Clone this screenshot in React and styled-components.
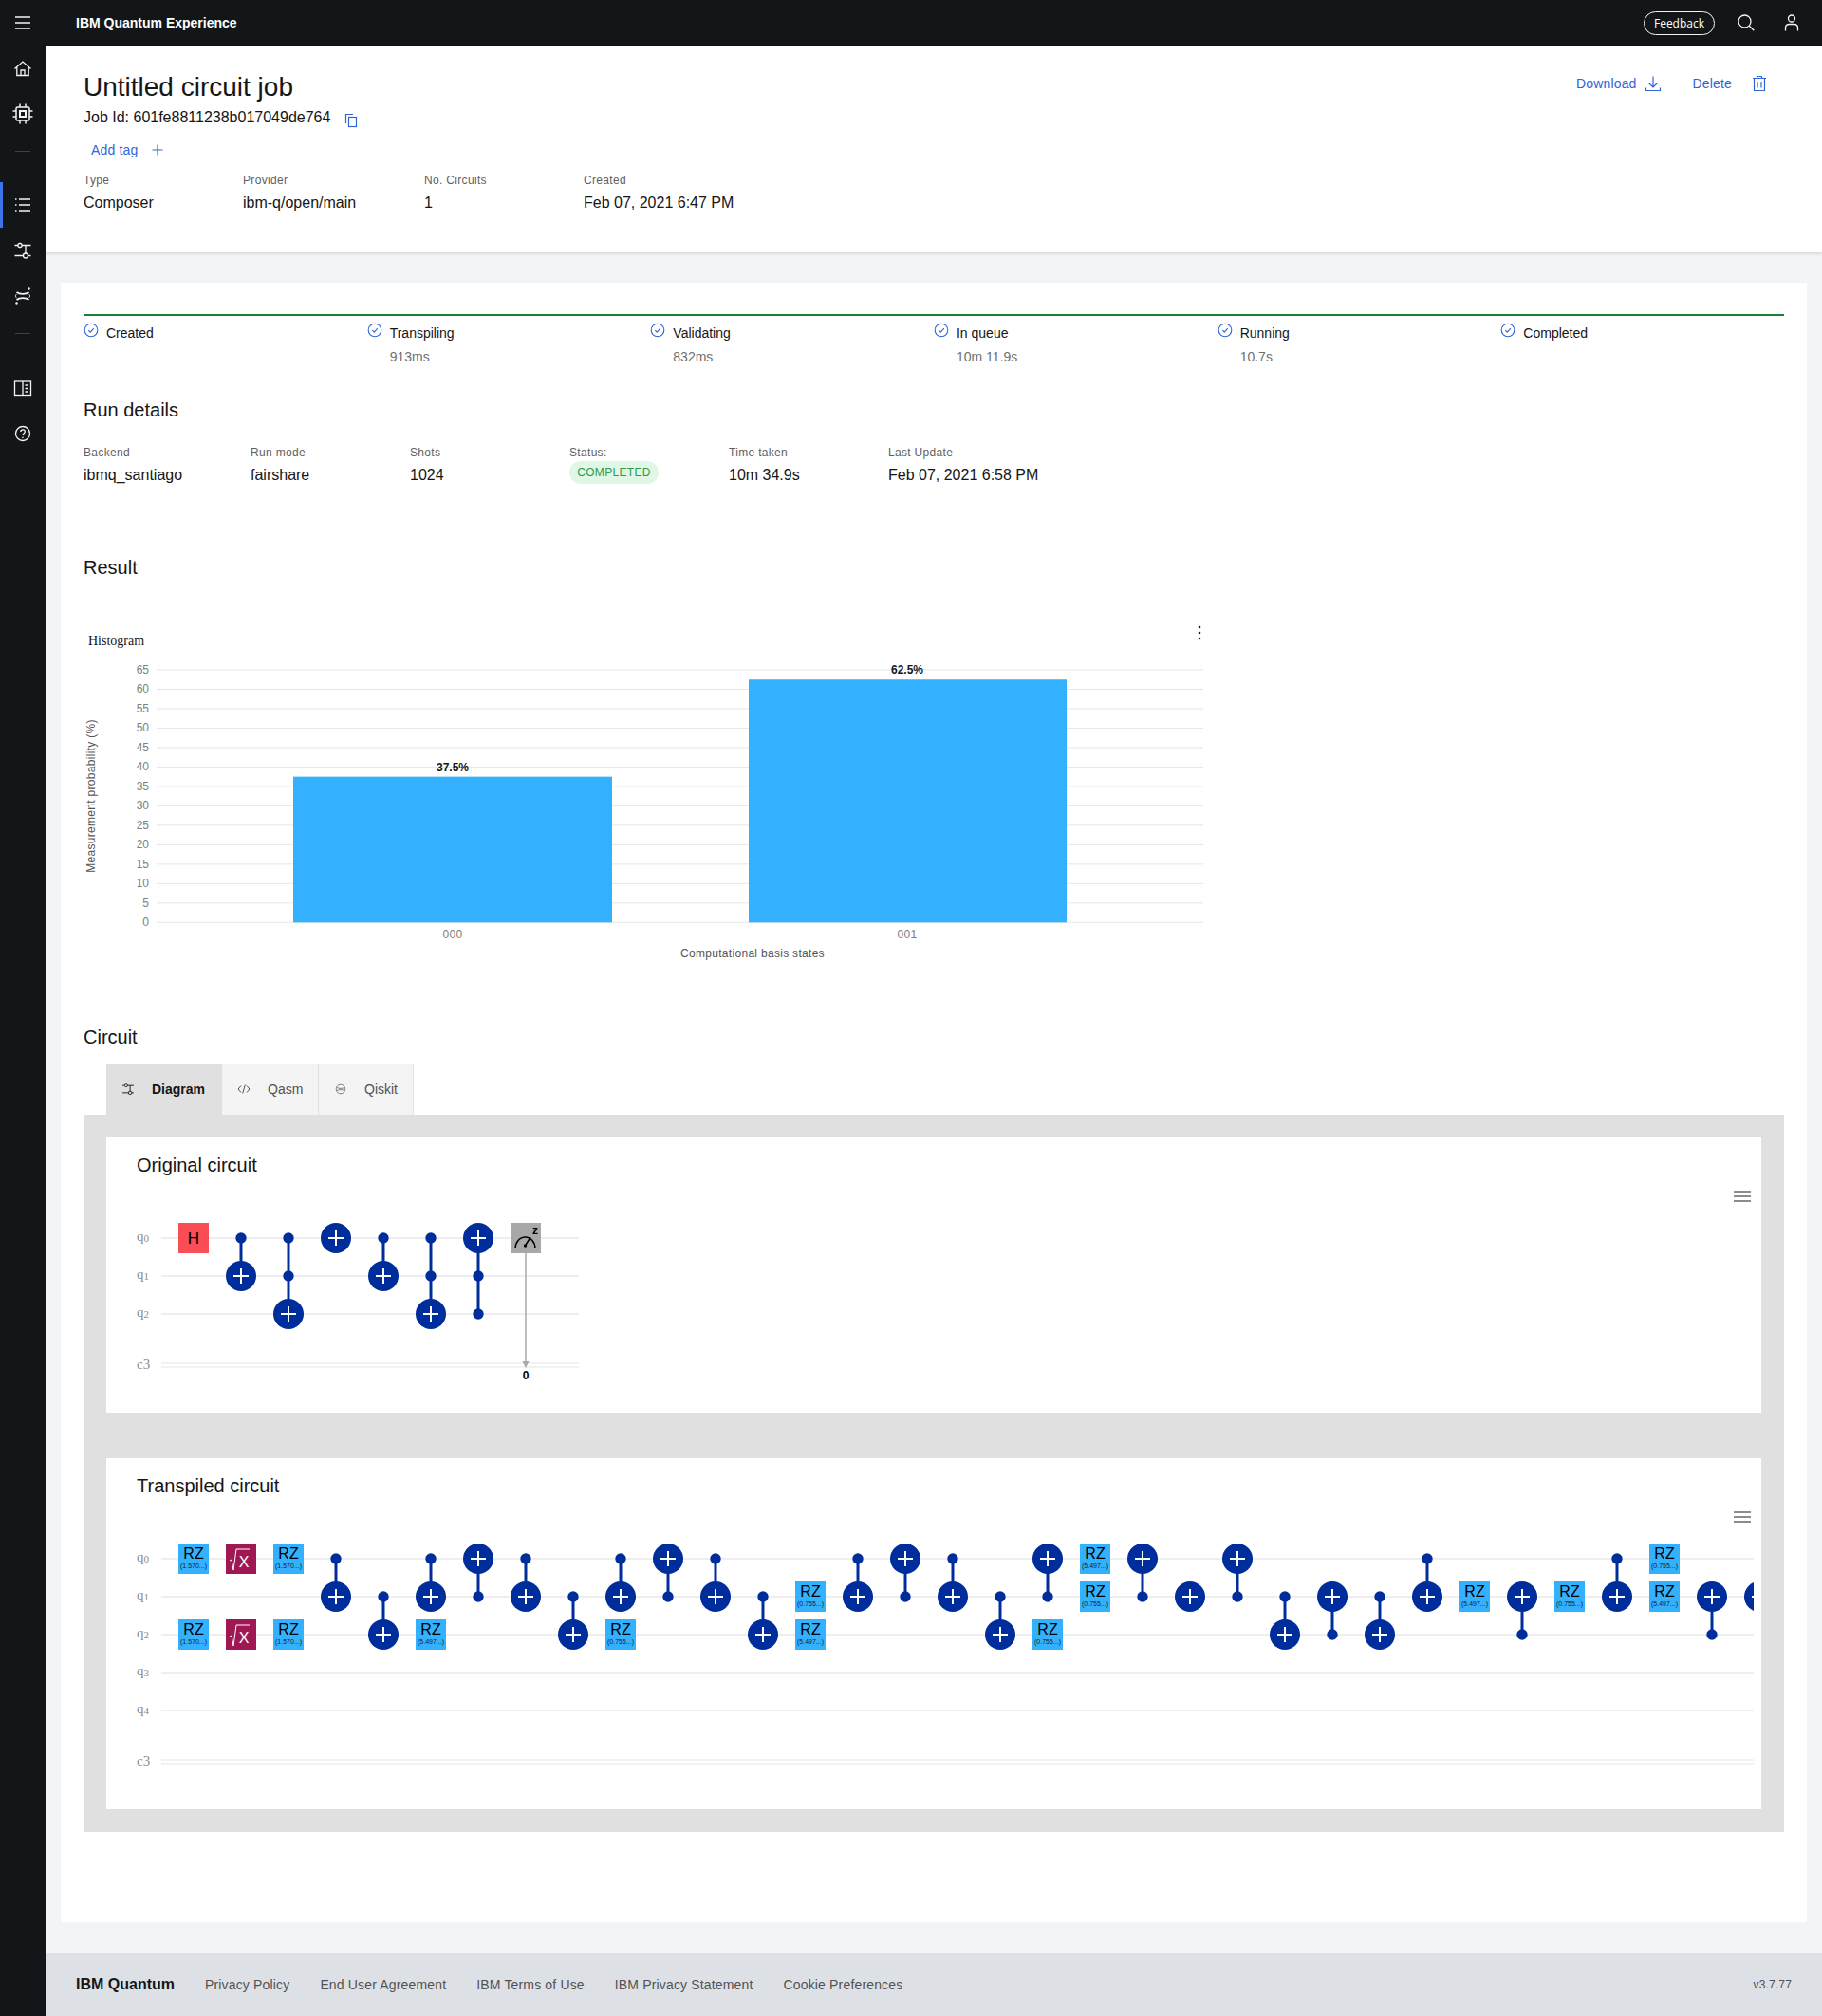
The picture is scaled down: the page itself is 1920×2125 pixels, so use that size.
import styled, { createGlobalStyle } from "styled-components";

const Global = createGlobalStyle`
  html, body { margin: 0; padding: 0; background: #f2f4f8; }
  body { font-family: "Liberation Sans", Arial, sans-serif; color: #161616; }
  * { box-sizing: border-box; }
`;

const blue = "#2f66d8";

const Page = styled.div`
  width: 1920px;
  height: 2125px;
  display: flex;
  flex-direction: column;
  overflow: hidden;
`;
const TopBar = styled.header`
  height: 48px;
  flex: none;
  padding-right: 8px;
  background: #121619;
  color: #fff;
  display: flex;
  align-items: center;
`;
const IconCell = styled.div`
  width: 48px;
  height: 48px;
  flex: none;
  display: flex;
  align-items: center;
  justify-content: center;
  color: #f4f4f4;
`;
const Brand = styled.div`
  margin-left: 32px;
  font-size: 14px;
  font-weight: 700;
  flex: 1;
`;
const Feedback = styled.div`
  width: 75px;
  height: 25px;
  margin-right: 9px;
  border: 1px solid #f4f4f4;
  border-radius: 13px;
  font-family: "Open Sans", sans-serif;
  font-size: 12px;
  display: flex;
  align-items: center;
  justify-content: center;
`;
const Body = styled.div`
  flex: 1;
  display: flex;
  min-height: 0;
`;
const Sidebar = styled.nav`
  width: 48px;
  flex: none;
  background: #121619;
  display: flex;
  flex-direction: column;
`;
const SideDivider = styled.div`
  width: 16px;
  height: 1px;
  margin: 15px 0 ${(p) => p.$after};
  align-self: center;
  background: #3d4246;
`;
const SideActive = styled(IconCell)`
  border-left: 3px solid #3d74ea;
  padding-right: 3px;
`;
const Main = styled.main`
  flex: 1;
  min-width: 0;
  display: flex;
  flex-direction: column;
`;
const JobHeader = styled.section`
  height: 218px;
  flex: none;
  padding: 26px 0 0 40px;
  background: #fff;
  box-shadow: 0 1px 4px rgba(0, 0, 0, 0.16);
  display: flex;
  justify-content: space-between;
`;
const Title = styled.h1`
  margin: 0;
  font-size: 28px;
  line-height: 36px;
  font-weight: 400;
`;
const JobId = styled.div`
  margin-top: 2px;
  display: flex;
  align-items: center;
  gap: 14px;
  font-size: 16px;
  line-height: 24px;
  svg { margin-top: 5px; color: ${blue}; }
`;
const AddTag = styled.div`
  margin: 12px 0 0 8px;
  display: flex;
  align-items: center;
  gap: 14px;
  font-size: 14px;
  line-height: 20px;
  letter-spacing: 0.16px;
  color: ${blue};
`;
const Meta = styled.div`
  margin-top: ${(p) => p.$top};
  display: grid;
  grid-template-columns: ${(p) => p.$cols};
`;
const MetaLabel = styled.div`
  font-size: 12px;
  line-height: 16px;
  letter-spacing: 0.32px;
  color: #5f5f5f;
`;
const MetaValue = styled.div`
  margin-top: 4px;
  font-size: 16px;
  line-height: 24px;
`;
const Pill = styled.div`
  width: 94px;
  height: 24px;
  margin-top: 1px;
  border-radius: 12px;
  background: #e0f7e5;
  color: #2c9a50;
  font-size: 12px;
  letter-spacing: 0.32px;
  display: flex;
  align-items: center;
  justify-content: center;
`;
const Actions = styled.div`
  margin: 2px 57px 0 0;
  display: flex;
  align-items: flex-start;
  gap: 33px;
`;
const Action = styled.div`
  display: flex;
  align-items: center;
  gap: ${(p) => p.$gap};
  height: 24px;
  font-size: 14px;
  letter-spacing: 0.16px;
  color: ${blue};
`;
const Card = styled.section`
  margin: 32px 16px 33px 16px;
  height: 1728px;
  flex: none;
  padding: 33px 24px 0;
  background: #fff;
`;
const Stepper = styled.div`
  border-top: 2px solid #198038;
  display: grid;
  grid-template-columns: repeat(6, 1fr);
`;
const Step = styled.div`
  padding-top: 7px;
  display: flex;
  gap: 8px;
  svg { flex: none; }
`;
const StepName = styled.div`
  margin-top: 1px;
  font-size: 14px;
  line-height: 20px;
`;
const StepTime = styled.div`
  margin-top: 5px;
  font-size: 14px;
  line-height: 20px;
  color: #6f6f6f;
`;
const Heading = styled.h2`
  margin: ${(p) => p.$top} 0 0;
  font-size: 20px;
  line-height: 28px;
  font-weight: 400;
`;
const Chart = styled.svg`
  display: block;
  margin-top: 38px;
  font-family: "Liberation Sans", Arial, sans-serif;
`;
const Tabs = styled.div`
  margin: 15px 0 0 24px;
  height: 53px;
  display: flex;
`;
const Tab = styled.div`
  width: ${(p) => p.$width};
  display: flex;
  align-items: center;
  gap: 18px;
  padding: 0 0 2px 16px;
  font-size: 14px;
  font-weight: ${(p) => (p.$active ? 700 : 400)};
  color: ${(p) => (p.$active ? "#161616" : "#525252")};
  background: ${(p) => (p.$active ? "#e0e0e0" : "#f4f4f4")};
  border-right: ${(p) => (p.$active ? "none" : "1px solid #e0e0e0")};
`;
const Panel = styled.div`
  padding: 24px;
  background: #e0e0e0;
  display: flex;
  flex-direction: column;
  gap: 48px;
`;
const CircuitCard = styled.div`
  background: #fff;
  padding-top: 17px;
`;
const CircuitTitle = styled.h3`
  margin: 0 0 -1px 32px;
  font-size: 20px;
  line-height: 24px;
  font-weight: 400;
`;
const Diagram = styled.svg`
  display: block;
  font-family: "Liberation Sans", Arial, sans-serif;
`;
const Footer = styled.footer`
  height: 66px;
  flex: none;
  padding: 0 32px;
  background: #dde1e6;
  display: flex;
  align-items: center;
  gap: 32px;
  font-size: 14px;
  letter-spacing: 0.16px;
  color: #525252;
`;
const FooterBrand = styled.div`
  font-size: 16px;
  font-weight: 700;
  letter-spacing: 0;
  color: #161616;
`;
const Version = styled.div`
  margin-left: auto;
  font-size: 12px;
`;

const Icon = ({ size = 20, view = 20, width = 1.3, children }) => (
  <svg width={size} height={size} viewBox={`0 0 ${view} ${view}`} fill="none" stroke="currentColor" strokeWidth={width}>
    {children}
  </svg>
);

const MenuIcon = () => (
  <Icon><path d="M2 4h16M2 10h16M2 16h16" strokeWidth="1.5" /></Icon>
);
const HomeIcon = () => (
  <Icon><path d="M1.5 10.5 10 3l8.5 7.5M3.8 9v8.5h12.4V9M8 17.5V12h4v5.5" /></Icon>
);
const ChipIcon = () => (
  <Icon size={24} view={24} width={1.5}>
    <rect x="5" y="5" width="14" height="14" rx="1.5" />
    <rect x="9" y="9" width="6" height="6" strokeWidth="2" />
    <path d="M9 1.5V5M15 1.5V5M9 19v3.5M15 19v3.5M1.5 9H5M1.5 15H5M19 9h3.5M19 15h3.5" />
  </Icon>
);
const ListIcon = () => (
  <Icon>
    <path d="M6 4h12M6 10h12M6 16h12" />
    <path d="M2 4h1.5M2 10h1.5M2 16h1.5" />
  </Icon>
);
const CircuitIcon = ({ size = 20 }) => (
  <Icon size={size}>
    <path d="M1.500 4.500H5M9 4.500h9.500M13 4.500v9M1.500 15.500H10.500M15.500 15.500h3" />
    <rect x="5" y="2.500" width="4" height="4" rx="1.500" />
    <circle cx="13" cy="15.500" r="2.500" />
  </Icon>
);
const QuantumIcon = () => (
  <Icon>
    <path d="M3.500 6c3 2.500 10 2.500 13 0M3.500 14c3-2.500 10-2.500 13 0" strokeWidth="1.700" />
    <path d="M3.500 8c-1.500 1.300-1.500 2.700 0 4M16.500 8c1.500 1.300 1.500 2.700 0 4" strokeWidth="0.800" />
    <circle cx="16.500" cy="2.500" r="1.200" fill="currentColor" stroke="none" />
    <circle cx="3.500" cy="17.500" r="1.200" fill="currentColor" stroke="none" />
  </Icon>
);
const BookIcon = () => (
  <Icon>
    <rect x="1.500" y="3" width="17" height="14.500" />
    <path d="M10 3v14.500M12.500 7h3.500M12.500 10.500h3.500M12.500 14h3.500" />
  </Icon>
);
const HelpIcon = () => (
  <Icon>
    <circle cx="10" cy="10" r="7.500" />
    <path d="M7.800 8c0-1.300 1-2.200 2.300-2.200s2.200.9 2.200 2c0 1.900-2.300 1.800-2.300 3.800" />
    <circle cx="10" cy="14.200" r=".8" fill="currentColor" stroke="none" />
  </Icon>
);
const SearchIcon = () => (
  <Icon size={20}>
    <circle cx="8.500" cy="8.500" r="6.500" />
    <path d="m13.300 13.300 5 5" />
  </Icon>
);
const UserIcon = () => (
  <Icon size={20}>
    <circle cx="10" cy="5.500" r="3.500" />
    <path d="M3.500 18.500v-3c0-2.500 1.800-4 4-4h5c2.200 0 4 1.500 4 4v3" />
  </Icon>
);
const CopyIcon = () => (
  <Icon size={16} view={16} width={1.200}>
    <rect x="5.500" y="4.500" width="8" height="10" />
    <path d="M2.500 11V1.500H10" />
  </Icon>
);
const PlusIcon = () => (
  <Icon size={14} view={14} width={1.200}><path d="M7 1.500v11M1.500 7h11" /></Icon>
);
const DownloadIcon = () => (
  <Icon size={18} view={18} width={1.200}>
    <path d="M9 1.500v11M4.500 8.500 9 13l4.500-4.500M1.500 13.500v3h15v-3" />
  </Icon>
);
const TrashIcon = () => (
  <Icon size={18} view={18} width={1.200}>
    <path d="M2 3.500h14M6.500 3.500V1.500h5v2M3.500 3.500v13h11v-13M7 7v6.500M11 7v6.500" />
  </Icon>
);
const CheckIcon = () => (
  <svg width="16" height="16" viewBox="0 0 16 16" fill="none" stroke={blue} strokeWidth="1.100">
    <circle cx="8" cy="8" r="6.800" />
    <path d="m5.300 8.200 2 2 3.500-4" />
  </svg>
);
const CodeIcon = () => (
  <Icon size={14} view={14} width={1}><path d="M4 3.500 1 7l3 3.500M10 3.500 13 7l-3 3.500M8.300 2.500l-2.600 9" /></Icon>
);
const QiskitIcon = () => (
  <Icon size={14} view={14} width={0.700}>
    <circle cx="7" cy="7" r="4.800" />
    <path d="M3.200 5.500c2 1.200 5.600 1.200 7.600 0M3.200 8.500c2-1.200 5.600-1.200 7.600 0" />
  </Icon>
);

const ticks = Array.from({ length: 14 }, (_, i) => i * 5);
const toY = (v) => 322.3 - v * 4.097;

const Histogram = () => (
  <Chart width="1200" height="370">
    <text x="5" y="30" fontFamily="Liberation Serif" fontSize="14" fill="#161616">Histogram</text>
    <g fill="#161616">
      <circle cx="1176" cy="11" r="1.300" />
      <circle cx="1176" cy="17" r="1.300" />
      <circle cx="1176" cy="23" r="1.300" />
    </g>
    {ticks.map((v) => (
      <g key={v}>
        <line x1="77" x2="1180" y1={toY(v)} y2={toY(v)} stroke="#e6e6e6" />
        <text x="69" y={toY(v) + 4} textAnchor="end" fontSize="12" fill="#808080">{v}</text>
      </g>
    ))}
    <text transform="translate(12 189) rotate(-90)" textAnchor="middle" fontSize="12" letterSpacing="0.3" fill="#555">Measurement probability (%)</text>
    <rect x="221" y={toY(37.5)} width="336" height={37.5 * 4.097} fill="#33b1ff" />
    <rect x="701" y={toY(62.5)} width="335" height={62.5 * 4.097} fill="#33b1ff" />
    <text x="389" y="163" textAnchor="middle" fontSize="12" fontWeight="700" fill="#161616">37.5%</text>
    <text x="868" y="60" textAnchor="middle" fontSize="12" fontWeight="700" fill="#161616">62.5%</text>
    <text x="389" y="339" textAnchor="middle" fontSize="12" letterSpacing="0.3" fill="#808080">000</text>
    <text x="868" y="339" textAnchor="middle" fontSize="12" letterSpacing="0.3" fill="#808080">001</text>
    <text x="705" y="359" textAnchor="middle" fontSize="12" letterSpacing="0.3" fill="#555">Computational basis states</text>
  </Chart>
);

const wireY = (q) => 66 + q * 40;
const colX = (i) => 92 + i * 50;
const navy = "#002d9c";

const Cnot = ({ col, controls, target }) => {
  const x = colX(col);
  const all = target === undefined ? controls : [...controls, target];
  return (
    <g>
      {all.length > 1 && (
        <line x1={x} x2={x} y1={wireY(Math.min(...all))} y2={wireY(Math.max(...all))} stroke={navy} strokeWidth="3" />
      )}
      {controls.map((q) => (
        <circle key={q} cx={x} cy={wireY(q)} r="5.700" fill={navy} />
      ))}
      {target !== undefined && (
        <g>
          <circle cx={x} cy={wireY(target)} r="16" fill={navy} />
          <path d={`M${x - 8} ${wireY(target)}h16M${x} ${wireY(target) - 8}v16`} stroke="#fff" strokeWidth="2" />
        </g>
      )}
    </g>
  );
};

const GateBox = ({ col, q, fill }) => (
  <rect x={colX(col) - 16} y={wireY(q) - 16} width="32" height="32" fill={fill} />
);

const Rz = ({ col, q, param }) => (
  <g>
    <GateBox col={col} q={q} fill="#33b1ff" />
    <text x={colX(col)} y={wireY(q) - 0.500} textAnchor="middle" fontSize="16" fill="#000">RZ</text>
    <text x={colX(col)} y={wireY(q) + 9.500} textAnchor="middle" fontSize="7" fill="#1c1c1c">({param}...)</text>
  </g>
);

const SqrtX = ({ col, q }) => {
  const x = colX(col);
  const y = wireY(q);
  return (
    <g>
      <GateBox col={col} q={q} fill="#9f1853" />
      <path d={`M${x - 12} ${y + 2}l2-1 2 11 3-22h14`} fill="none" stroke="#fff" strokeWidth="1" />
      <text x={x + 3} y={y + 9} textAnchor="middle" fontSize="16" fill="#fff">X</text>
    </g>
  );
};

const Hadamard = ({ col, q }) => (
  <g>
    <GateBox col={col} q={q} fill="#fa4d56" />
    <text x={colX(col)} y={wireY(q) + 6} textAnchor="middle" fontSize="17" fill="#000">H</text>
  </g>
);

const Measure = ({ col, q, to }) => {
  const x = colX(col);
  const y = wireY(q);
  return (
    <g>
      <line x1={x} x2={x} y1={y + 16} y2={to - 5} stroke="#a8a8a8" strokeWidth="1.500" />
      <path d={`M${x - 3.500} ${to - 6}h7L${x} ${to + 1}z`} fill="#a8a8a8" />
      <GateBox col={col} q={q} fill="#a8a8a8" />
      <path d={`M${x - 11} ${y + 11}a10.500 12 0 0 1 21 0M${x - 0.500} ${y + 8}l5.500-9`} fill="none" stroke="#000" strokeWidth="1.500" />
      <circle cx={x - 0.500} cy={y + 8} r="1.700" fill="#000" />
      <text x={x + 10} y={y - 4} textAnchor="middle" fontSize="12" fontWeight="700" fill="#000">z</text>
      <text x={x} y={to + 13} textAnchor="middle" fontSize="12" fontWeight="700" fill="#000">0</text>
    </g>
  );
};

const WireLabel = ({ y, name, index }) => (
  <text x="32" y={y + 3} fontFamily="Liberation Serif" fontSize="15" fill="#8d8d8d">
    {name}
    {name === "q" ? <tspan fontSize="11" dy="1">{index}</tspan> : <tspan>{index}</tspan>}
  </text>
);

const Wires = ({ qubits, bitY, end }) => (
  <g>
    {Array.from({ length: qubits }, (_, q) => (
      <g key={q}>
        <line x1="58" x2={end} y1={wireY(q)} y2={wireY(q)} stroke="#eeeeee" strokeWidth="2" />
        <WireLabel y={wireY(q)} name="q" index={q} />
      </g>
    ))}
    <line x1="58" x2={end} y1={bitY} y2={bitY} stroke="#eeeeee" strokeWidth="1.500" />
    <line x1="58" x2={end} y1={bitY + 4} y2={bitY + 4} stroke="#eeeeee" strokeWidth="1.500" />
    <WireLabel y={bitY + 3} name="c" index="3" />
  </g>
);

const Hamburger = () => (
  <path d="M1715 17h18M1715 22h18M1715 27h18" stroke="#8c8c8c" strokeWidth="2" />
);

const OriginalDiagram = () => (
  <Diagram width="1736" height="250">
    <Wires qubits={3} bitY={198} end={498} />
    <Hamburger />
    <Hadamard col={0} q={0} />
    <Cnot col={1} controls={[0]} target={1} />
    <Cnot col={2} controls={[0, 1]} target={2} />
    <Cnot col={3} controls={[]} target={0} />
    <Cnot col={4} controls={[0]} target={1} />
    <Cnot col={5} controls={[0, 1]} target={2} />
    <Cnot col={6} controls={[1, 2]} target={0} />
    <Measure col={7} q={0} to={202} />
  </Diagram>
);

// col -> gates of the transpiled circuit
const P1 = "1.570";
const P5 = "5.497";
const P0 = "0.755";
const transpiled = [
  { rz: [[0, P1], [2, P1]] },
  { sx: [0, 2] },
  { rz: [[0, P1], [2, P1]] },
  { c: 0, t: 1 },
  { c: 1, t: 2 },
  { c: 0, t: 1, rz: [[2, P5]] },
  { c: 1, t: 0 },
  { c: 0, t: 1 },
  { c: 1, t: 2 },
  { c: 0, t: 1, rz: [[2, P0]] },
  { c: 1, t: 0 },
  { c: 0, t: 1 },
  { c: 1, t: 2 },
  { rz: [[1, P0], [2, P5]] },
  { c: 0, t: 1 },
  { c: 1, t: 0 },
  { c: 0, t: 1 },
  { c: 1, t: 2 },
  { c: 1, t: 0, rz: [[2, P0]] },
  { rz: [[0, P5], [1, P0]] },
  { c: 1, t: 0 },
  { t: 1 },
  { c: 1, t: 0 },
  { c: 1, t: 2 },
  { c: 2, t: 1 },
  { c: 1, t: 2 },
  { c: 0, t: 1 },
  { rz: [[1, P5]] },
  { c: 2, t: 1 },
  { rz: [[1, P0]] },
  { c: 0, t: 1 },
  { rz: [[0, P0], [1, P5]] },
  { c: 2, t: 1 },
  { t: 1 },
];

const TranspiledDiagram = () => (
  <Diagram width="1736" height="330">
    <Wires qubits={5} bitY={278} end={1736} />
    <Hamburger />
    {transpiled.map((g, col) => (
      <g key={col}>
        {g.t !== undefined && <Cnot col={col} controls={g.c !== undefined ? [g.c] : []} target={g.t} />}
        {(g.rz || []).map(([q, param]) => <Rz key={q} col={col} q={q} param={param} />)}
        {(g.sx || []).map((q) => <SqrtX key={q} col={col} q={q} />)}
      </g>
    ))}
  </Diagram>
);

const headerMeta = [
  ["Type", "Composer"],
  ["Provider", "ibm-q/open/main"],
  ["No. Circuits", "1"],
  ["Created", "Feb 07, 2021 6:47 PM"],
];
const steps = [
  ["Created"],
  ["Transpiling", "913ms"],
  ["Validating", "832ms"],
  ["In queue", "10m 11.9s"],
  ["Running", "10.7s"],
  ["Completed"],
];
const footerLinks = ["Privacy Policy", "End User Agreement", "IBM Terms of Use", "IBM Privacy Statement", "Cookie Preferences"];

export default function App() {
  return (
    <Page>
      <Global />
      <TopBar>
        <IconCell><MenuIcon /></IconCell>
        <Brand>IBM Quantum Experience</Brand>
        <Feedback>Feedback</Feedback>
        <IconCell><SearchIcon /></IconCell>
        <IconCell><UserIcon /></IconCell>
      </TopBar>
      <Body>
        <Sidebar>
          <IconCell><HomeIcon /></IconCell>
          <IconCell><ChipIcon /></IconCell>
          <SideDivider $after="32px" />
          <SideActive><ListIcon /></SideActive>
          <IconCell><CircuitIcon /></IconCell>
          <IconCell><QuantumIcon /></IconCell>
          <SideDivider $after="33px" />
          <IconCell><BookIcon /></IconCell>
          <IconCell><HelpIcon /></IconCell>
        </Sidebar>
        <Main>
          <JobHeader>
            <div>
              <Title>Untitled circuit job</Title>
              <JobId>Job Id: 601fe8811238b017049de764 <CopyIcon /></JobId>
              <AddTag>Add tag <PlusIcon /></AddTag>
              <Meta $top="14px" $cols="168px 191px 168px auto">
                {headerMeta.map(([label, value]) => (
                  <div key={label}>
                    <MetaLabel>{label}</MetaLabel>
                    <MetaValue>{value}</MetaValue>
                  </div>
                ))}
              </Meta>
            </div>
            <Actions>
              <Action $gap="8px">Download <DownloadIcon /></Action>
              <Action $gap="20px">Delete <TrashIcon /></Action>
            </Actions>
          </JobHeader>
          <Card>
            <Stepper>
              {steps.map(([name, time]) => (
                <Step key={name}>
                  <CheckIcon />
                  <div>
                    <StepName>{name}</StepName>
                    {time && <StepTime>{time}</StepTime>}
                  </div>
                </Step>
              ))}
            </Stepper>
            <Heading $top="32px">Run details</Heading>
            <Meta $top="23px" $cols="176px 168px 168px 168px 168px auto">
              <div><MetaLabel>Backend</MetaLabel><MetaValue>ibmq_santiago</MetaValue></div>
              <div><MetaLabel>Run mode</MetaLabel><MetaValue>fairshare</MetaValue></div>
              <div><MetaLabel>Shots</MetaLabel><MetaValue>1024</MetaValue></div>
              <div><MetaLabel>Status:</MetaLabel><Pill>COMPLETED</Pill></div>
              <div><MetaLabel>Time taken</MetaLabel><MetaValue>10m 34.9s</MetaValue></div>
              <div><MetaLabel>Last Update</MetaLabel><MetaValue>Feb 07, 2021 6:58 PM</MetaValue></div>
            </Meta>
            <Heading $top="71px">Result</Heading>
            <Histogram />
            <Heading $top="59px">Circuit</Heading>
            <Tabs>
              <Tab $active $width="122px"><CircuitIcon size={14} /> Diagram</Tab>
              <Tab $width="102px"><CodeIcon /> Qasm</Tab>
              <Tab $width="100px"><QiskitIcon /> Qiskit</Tab>
            </Tabs>
            <Panel>
              <CircuitCard>
                <CircuitTitle>Original circuit</CircuitTitle>
                <OriginalDiagram />
              </CircuitCard>
              <CircuitCard>
                <CircuitTitle>Transpiled circuit</CircuitTitle>
                <TranspiledDiagram />
              </CircuitCard>
            </Panel>
          </Card>
          <Footer>
            <FooterBrand>IBM Quantum</FooterBrand>
            {footerLinks.map((l) => <div key={l}>{l}</div>)}
            <Version>v3.7.77</Version>
          </Footer>
        </Main>
      </Body>
    </Page>
  );
}
